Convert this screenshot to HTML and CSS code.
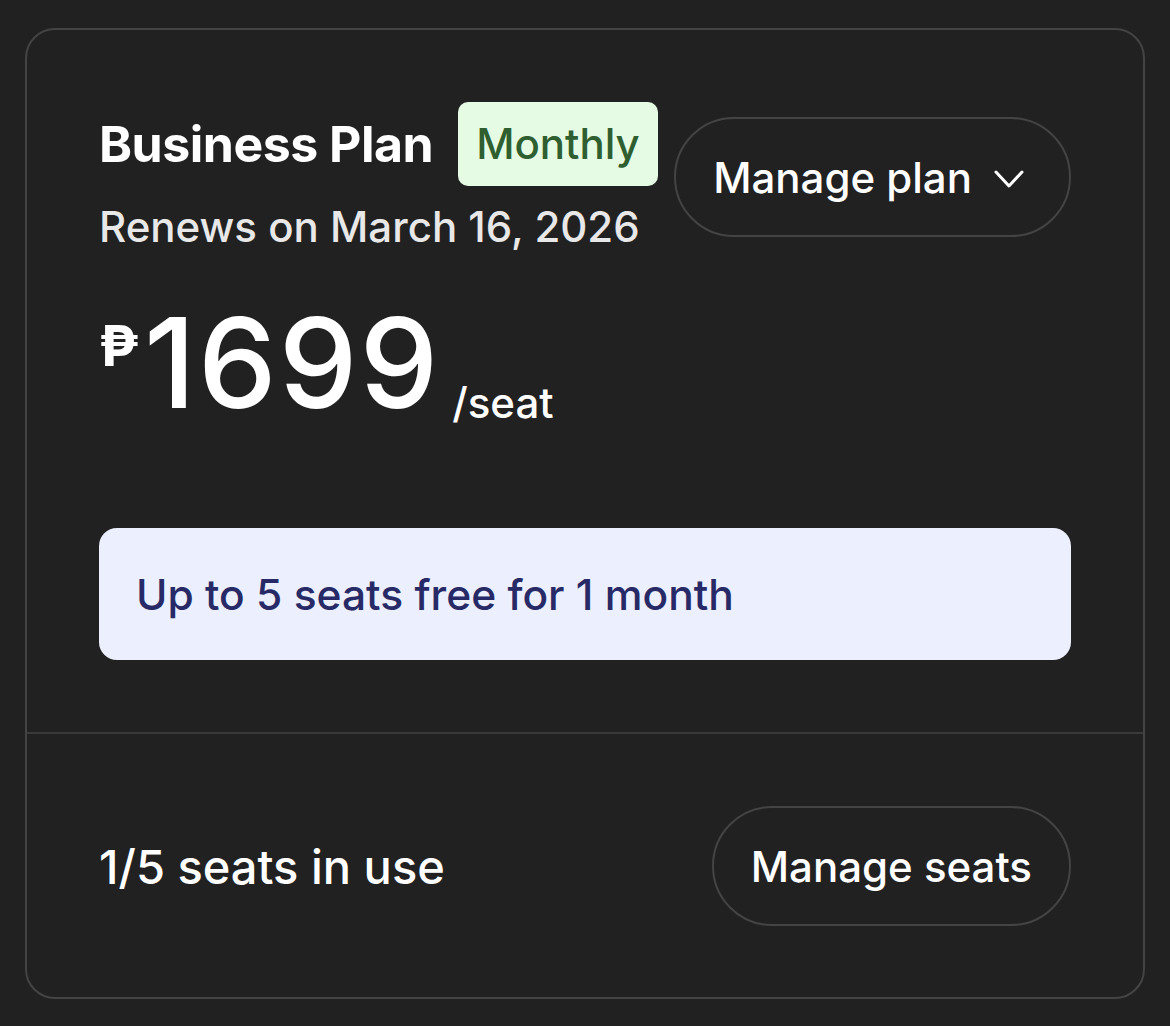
FILE: index.html
```html
<!DOCTYPE html>
<html lang="en">
<head>
  <meta charset="UTF-8" />
  <meta name="viewport" content="width=device-width, initial-scale=1.0" />
  <title>Billing</title>
  <link rel="stylesheet" href="styles.css">
</head>
<body>

  <div class="plan-card">
    <div class="plan-main">
      <div class="plan-header">
        <div class="plan-info">
          <div class="plan-title-row">
            <h2 class="plan-title">Business Plan</h2>
            <span class="badge">Monthly</span>
          </div>
          <p class="renews">Renews on March 16, 2026</p>
        </div>
        <button class="pill-btn plan-btn">
          Manage plan
          <svg class="chevron" width="30" height="18" viewBox="0 0 30 18" fill="none" stroke="currentColor" stroke-width="3" stroke-linecap="round" stroke-linejoin="round"><path d="M2 2l13 14 13-14"/></svg>
        </button>
      </div>

      <div class="price">
        <span class="currency">₱</span>
        <span class="amount">1699</span>
        <span class="per">/seat</span>
      </div>

      <div class="promo">Up to 5 seats free for 1 month</div>
    </div>

    <div class="plan-footer">
      <span class="seats">1/5 seats in use</span>
      <button class="pill-btn">Manage seats</button>
    </div>
  </div>

</body>
</html>
```

FILE: styles.css
```css
body {
  font-family: Inter, 'Noto Sans', sans-serif;
  background: #212121;
  color: #fff;
  margin: 0;
  padding: 28px 25px 26px;
}

.plan-card {
  border: 2px solid #444;
  border-radius: 30px;
  background: #212121;
}

.plan-main {
  padding: 72px 72px;
  border-bottom: 2px solid #3a3a3a;
}

.plan-header {
  display: flex;
  align-items: center;
  justify-content: space-between;
}

.plan-title-row {
  display: flex;
  align-items: center;
  gap: 25px;
}

.plan-title {
  margin: 0;
  font-size: 50px;
  font-weight: 700;
  letter-spacing: -0.5px;
}

.badge {
  background: #e5fbe4;
  color: #2f5e30;
  font-size: 42px;
  font-weight: 500;
  padding: 0 18px;
  height: 84px;
  line-height: 84px;
  border-radius: 10px;
}

.renews {
  margin: 15px 0 0;
  font-size: 42px;
  color: #e8e8e8;
  font-weight: 500;
}

.pill-btn {
  font-family: inherit;
  background: transparent;
  color: #fff;
  border: 2px solid #444;
  border-radius: 60px;
  height: 120px;
  padding: 0 37px;
  font-size: 42px;
  font-weight: 500;
  display: flex;
  align-items: center;
  gap: 22px;
  cursor: pointer;
}

.plan-btn {
  padding-right: 45px;
}

.chevron {
  margin-top: 4px;
}

.price {
  display: flex;
  align-items: flex-start;
  margin-top: 48px;
}

.currency {
  font-size: 56px;
  font-weight: 700;
  margin-top: 12px;
}

.amount {
  font-size: 125px;
  font-weight: 500;
  letter-spacing: 2px;
  line-height: 1;
  margin-left: 5px;
}

.per {
  font-size: 42px;
  font-weight: 500;
  align-self: flex-end;
  margin-left: 12px;
  margin-bottom: -3px;
}

.promo {
  margin-top: 103px;
  background: #eceffd;
  color: #272a66;
  border-radius: 18px;
  height: 132px;
  display: flex;
  align-items: center;
  padding: 0 37px;
  font-size: 42.5px;
  font-weight: 500;
}

.plan-footer {
  display: flex;
  align-items: center;
  justify-content: space-between;
  padding: 72px 72px 71px;
}

.seats {
  font-size: 47px;
  font-weight: 500;
}
```
